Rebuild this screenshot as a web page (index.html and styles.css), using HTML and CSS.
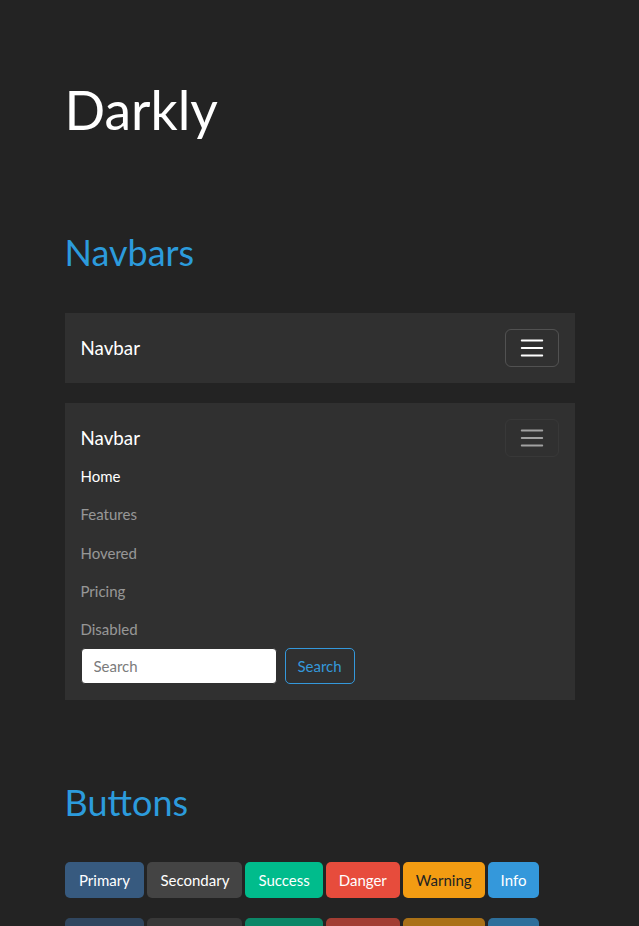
FILE: index.html
```html
<!DOCTYPE html>
<html lang="en">
<head>
<meta charset="utf-8">
<title>Darkly</title>
<link rel="stylesheet" href="styles.css">
</head>
<body>
<div class="container">
  <header class="banner">
    <h1 class="title">Darkly</h1>
  </header>

  <section class="section">
    <h2 class="section-title">Navbars</h2>

    <nav class="navbar">
      <div class="navbar-top">
        <span class="brand">Navbar</span>
        <button class="toggler" type="button" aria-label="Toggle navigation">
          <svg class="toggler-icon" viewBox="0 0 30 30" aria-hidden="true"><path d="M4 7h22M4 15h22M4 23h22" stroke-width="2" stroke-linecap="round"/></svg>
        </button>
      </div>
    </nav>

    <nav class="navbar navbar-open">
      <div class="navbar-top">
        <span class="brand">Navbar</span>
        <button class="toggler toggler-muted" type="button" aria-label="Toggle navigation">
          <svg class="toggler-icon" viewBox="0 0 30 30" aria-hidden="true"><path d="M4 7h22M4 15h22M4 23h22" stroke-width="2" stroke-linecap="round"/></svg>
        </button>
      </div>
      <ul class="nav-links">
        <li class="nav-link active">Home</li>
        <li class="nav-link">Features</li>
        <li class="nav-link">Hovered</li>
        <li class="nav-link">Pricing</li>
        <li class="nav-link disabled">Disabled</li>
      </ul>
      <form class="search-form">
        <input class="search-input" type="search" placeholder="Search">
        <button class="btn-outline" type="button">Search</button>
      </form>
    </nav>
  </section>

  <section class="section section-buttons">
    <h2 class="section-title">Buttons</h2>
    <div class="btn-row">
      <button class="btn btn-primary" type="button">Primary</button>
      <button class="btn btn-secondary" type="button">Secondary</button>
      <button class="btn btn-success" type="button">Success</button>
      <button class="btn btn-danger" type="button">Danger</button>
      <button class="btn btn-warning" type="button">Warning</button>
      <button class="btn btn-info" type="button">Info</button>
    </div>
    <div class="btn-row btn-row-disabled">
      <button class="btn btn-primary" type="button">Primary</button>
      <button class="btn btn-secondary" type="button">Secondary</button>
      <button class="btn btn-success" type="button">Success</button>
      <button class="btn btn-danger" type="button">Danger</button>
      <button class="btn btn-warning" type="button">Warning</button>
      <button class="btn btn-info" type="button">Info</button>
    </div>
  </section>
</div>
</body>
</html>
```

FILE: styles.css
```css
html {
  overflow: hidden;
}

body {
  margin: 0;
  background: #232323;
  color: #ffffff;
  font-family: Lato, "Open Sans", "Liberation Sans", sans-serif;
  font-size: 15px;
  line-height: 1.5;
}

.container {
  width: 510px;
  margin: 0 auto;
  padding: 0 15px;
}

.banner {
  padding-top: 76.5px;
}

.title {
  margin: 0;
  font-size: 53.5px;
  font-weight: 400;
  line-height: 1.2;
}

.section {
  padding-top: 90.5px;
}

.section-title {
  margin: 0 0 39px;
  font-size: 36px;
  font-weight: 400;
  line-height: 1.2;
  color: #2c9bdc;
}

.section-buttons {
  padding-top: 61px;
}

.section-buttons .section-title {
  margin-bottom: 37px;
}

/* Navbars */
.navbar {
  background: #303030;
  padding: 16px;
  margin-bottom: 20px;
}

.navbar-top {
  display: flex;
  align-items: center;
  justify-content: space-between;
}

.brand {
  font-size: 18.75px;
  line-height: 1.5;
  color: #ffffff;
}

.toggler {
  display: flex;
  align-items: center;
  justify-content: center;
  padding: 4px 12px;
  background: transparent;
  border: 1px solid rgba(255, 255, 255, 0.16);
  border-radius: 6px;
  font-size: 18.75px;
  line-height: 1;
}

.toggler-icon {
  display: block;
  width: 28px;
  height: 28px;
  stroke: #ffffff;
  fill: none;
}

.toggler-muted {
  border-color: rgba(255, 255, 255, 0.04);
}

.toggler-muted .toggler-icon {
  stroke: rgba(255, 255, 255, 0.55);
}

.nav-links {
  list-style: none;
  margin: 0;
  padding: 0;
}

.nav-link {
  padding: 7.85px 0;
  line-height: 22.5px;
  color: rgba(255, 255, 255, 0.5);
}

.nav-link.active {
  color: #ffffff;
}

.search-form {
  display: flex;
  align-items: center;
  gap: 8px;
}

.search-input {
  box-sizing: border-box;
  width: 196px;
  height: 36px;
  padding: 6px 12px;
  border: 1px solid #303030;
  border-radius: 4px;
  background: #ffffff;
  font-family: inherit;
  font-size: 15px;
  color: #303030;
}

.search-input::placeholder {
  color: #7b7b7b;
}

.btn-outline {
  height: 36px;
  padding: 6px 12px;
  background: transparent;
  border: 1px solid #3498db;
  border-radius: 5px;
  color: #3498db;
  font-family: inherit;
  font-size: 15px;
  line-height: 22.5px;
}

/* Buttons */
.btn-row {
  display: flex;
  gap: 3px;
  margin-bottom: 20px;
}

.btn {
  height: 36px;
  padding: 6px 12px;
  border: 1px solid transparent;
  border-radius: 5px;
  font-family: inherit;
  font-size: 15px;
  line-height: 22.5px;
  color: #ffffff;
}

.btn-primary { background: #375a7f; padding: 6px 13.5px; }
.btn-secondary { background: #444444; }
.btn-success { background: #00bc8c; }
.btn-danger { background: #e74c3c; }
.btn-warning { background: #f39c12; color: #222222; }
.btn-info { background: #3498db; }

.btn-row-disabled .btn {
  opacity: 0.65;
}
```
